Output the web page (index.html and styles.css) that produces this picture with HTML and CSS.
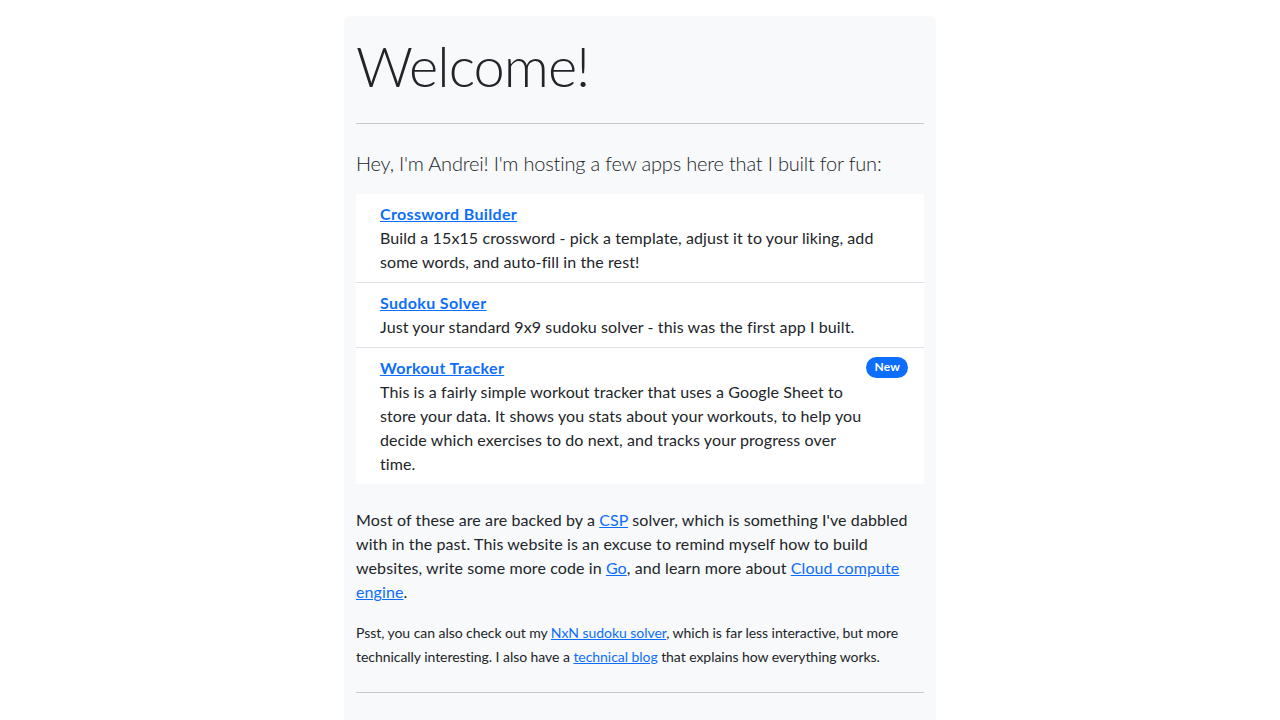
FILE: index.html
```html
<!DOCTYPE html>
<html lang="en">
<head>
<meta charset="utf-8">
<title>Welcome</title>
<link rel="stylesheet" href="styles.css">
</head>
<body>
<main class="panel">
  <h1 class="display">Welcome!</h1>
  <hr class="rule rule-top">
  <p class="lead">Hey, I'm Andrei! I'm hosting a few apps here that I built for fun:</p>
  <ul class="apps">
    <li class="app">
      <div class="app-body">
        <a class="app-title" href="#">Crossword Builder</a>
        <div class="app-desc">Build a 15x15 crossword - pick a template, adjust it to your liking, add some words, and auto-fill in the rest!</div>
      </div>
    </li>
    <li class="app">
      <div class="app-body">
        <a class="app-title" href="#">Sudoku Solver</a>
        <div class="app-desc">Just your standard 9x9 sudoku solver - this was the first app I built.</div>
      </div>
    </li>
    <li class="app">
      <div class="app-body">
        <a class="app-title" href="#">Workout Tracker</a>
        <div class="app-desc">This is a fairly simple workout tracker that uses a Google Sheet to store your data. It shows you stats about your workouts, to help you decide which exercises to do next, and tracks your progress over time.</div>
      </div>
      <span class="badge">New</span>
    </li>
  </ul>
  <p class="text">Most of these are are backed by a <a href="#">CSP</a> solver, which is something I've dabbled with in the past. This website is an excuse to remind myself how to build websites, write some more code in <a href="#">Go</a>, and learn more about <a href="#">Cloud compute engine</a>.</p>
  <p class="text"><small class="small">Psst, you can also check out my <a href="#">NxN sudoku solver</a>, which is far less interactive, but more technically interesting. I also have a <a href="#">technical blog</a> that explains how everything works.</small></p>
  <hr class="rule rule-bottom">
</main>
</body>
</html>
```

FILE: styles.css
```css
html, body {
  margin: 0;
  padding: 0;
  background: #ffffff;
}

body {
  font-family: "Lato", "Noto Sans", sans-serif;
  font-size: 16px;
  line-height: 1.5;
  letter-spacing: 0.1px;
  color: #212529;
}

a {
  color: #0d6efd;
  text-decoration: underline;
}

.panel {
  width: 592px;
  box-sizing: border-box;
  margin: 16px auto 0;
  padding: 16px 12px 40px;
  background: #f8f9fa;
  border-radius: 6px;
}

.display {
  margin: 0 0 8px;
  font-size: 56px;
  font-weight: 300;
  line-height: 1.2;
  letter-spacing: -1px;
}

.rule {
  border: 0;
  border-top: 1px solid #c8c9ca;
  margin: 0;
}

.rule-top {
  margin: 24px 0 24px;
}

.rule-bottom {
  margin: 24px 0 0;
}

.lead {
  margin: 0 0 16px;
  font-size: 20px;
  font-weight: 300;
  line-height: 1.5;
  letter-spacing: -0.2px;
}

.apps {
  list-style: none;
  margin: 0 0 24px;
  padding: 0;
  background: #ffffff;
}

.app {
  display: flex;
  justify-content: space-between;
  align-items: flex-start;
  padding: 8px 16px;
  border-top: 1px solid #dee2e6;
}

.app:first-child {
  border-top: 0;
}

.app-body {
  margin-left: 8px;
  margin-right: auto;
}

.app-title {
  font-weight: 700;
  letter-spacing: 0.35px;
}

.badge {
  flex: none;
  margin-top: 1px;
  padding: 3px 8px;
  font-size: 12px;
  font-weight: 700;
  line-height: 1.2;
  letter-spacing: 0.2px;
  color: #ffffff;
  background: #0d6efd;
  border-radius: 50rem;
}

.text {
  margin: 0 0 16px;
}

.small {
  font-size: 14px;
  letter-spacing: -0.05px;
}
```
